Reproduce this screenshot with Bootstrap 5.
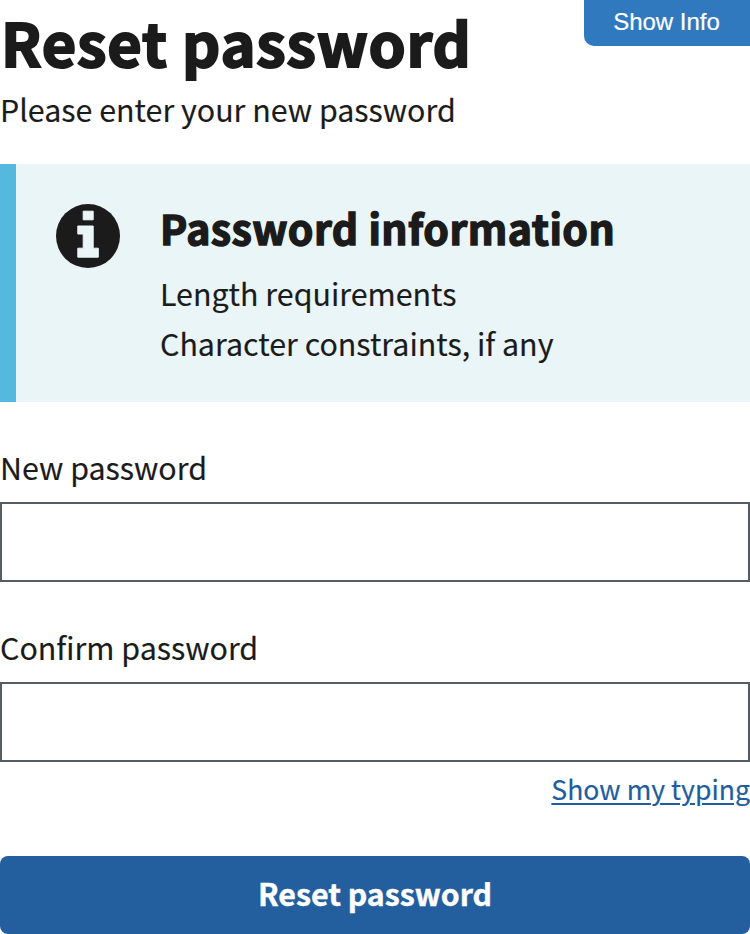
<!DOCTYPE html>
<html lang="en">
<head>
<meta charset="utf-8">
<meta name="viewport" content="width=device-width, initial-scale=1">
<title>Reset password</title>
<link href="https://cdn.jsdelivr.net/npm/bootstrap@5.3.0/dist/css/bootstrap.min.css" rel="stylesheet">
<style>
body{font-family:"Noto Sans CJK SC","Noto Sans",sans-serif;color:#1b1b1b;background:#fff;font-size:30.4px;line-height:50px;overflow:hidden}
.title{font-size:59.5px;line-height:72px;font-weight:700;margin:0;padding:5px 0 0 1px;height:80px;white-space:nowrap;letter-spacing:.8px;-webkit-text-stroke:2px #1b1b1b}
.intro{line-height:40px;padding-top:9px;height:84px;-webkit-text-stroke:.15px}
.info-toggle{font-family:"Liberation Sans",Arial,sans-serif;font-size:24px;line-height:44px;height:46px;width:166px;background:#3079bf;color:#fff;border-radius:0 0 0 10px;padding:0 1px 2px 0;-webkit-text-stroke:.2px}
.notice{height:238px;background:#eaf5f7;border-left:16px solid #55b9df;padding:40px}
.notice-icon{width:64px;height:64px;margin-right:40px}
.notice h2{font-size:41px;line-height:50px;font-weight:700;margin:-2px 0 16px;letter-spacing:.46px;-webkit-text-stroke:1.4px #1b1b1b}
.notice-text{-webkit-text-stroke:.15px}
.field-label{line-height:40px;height:55px;margin-top:45px;-webkit-text-stroke:.15px}
.field{height:80px;border:2px solid #565c65;border-radius:0}
.typing{font-size:26.6px;line-height:40px;color:#205d9e;text-decoration-thickness:2px;text-underline-offset:3px;-webkit-text-stroke:.15px}
.submit{height:78px;margin-top:44px;padding:0 0 5px;background:#235f9e;border-radius:8px;border:0;color:#fff;font-size:30.3px;line-height:40px;font-weight:700;-webkit-text-stroke:.4px}
</style>
</head>
<body>
<main>
<h1 class="title">Reset password</h1>
<p class="intro m-0">Please enter your new password</p>
<button class="info-toggle border-0 position-absolute top-0 end-0" type="button">Show Info</button>
<section class="notice d-flex align-items-start">
<svg class="notice-icon flex-shrink-0" viewBox="0 0 64 64" aria-hidden="true"><circle cx="32" cy="32" r="32" fill="#1b1b1b"/><g fill="#eaf5f7" stroke="#eaf5f7" stroke-linejoin="round"><path d="M27.2 7.2h10v8.6h-10z"/><path d="M21.8 22h15.4v22.2h5.1v9H21.8v-9h5.4V30h-5.4z"/></g></svg>
<div class="notice-text"><h2>Password information</h2><div>Length requirements</div><div>Character constraints, if any</div></div>
</section>
<form>
<label class="field-label d-block" for="new-password">New password</label>
<input class="field form-control" id="new-password" type="password">
<label class="field-label d-block" for="confirm-password">Confirm password</label>
<input class="field form-control" id="confirm-password" type="password">
<div class="text-end"><a class="typing" href="#">Show my typing</a></div>
<button class="submit btn w-100 d-block" type="button">Reset password</button>
</form>
</main>
<script src="https://cdn.jsdelivr.net/npm/bootstrap@5.3.0/dist/js/bootstrap.bundle.min.js"></script>
</body>
</html>
